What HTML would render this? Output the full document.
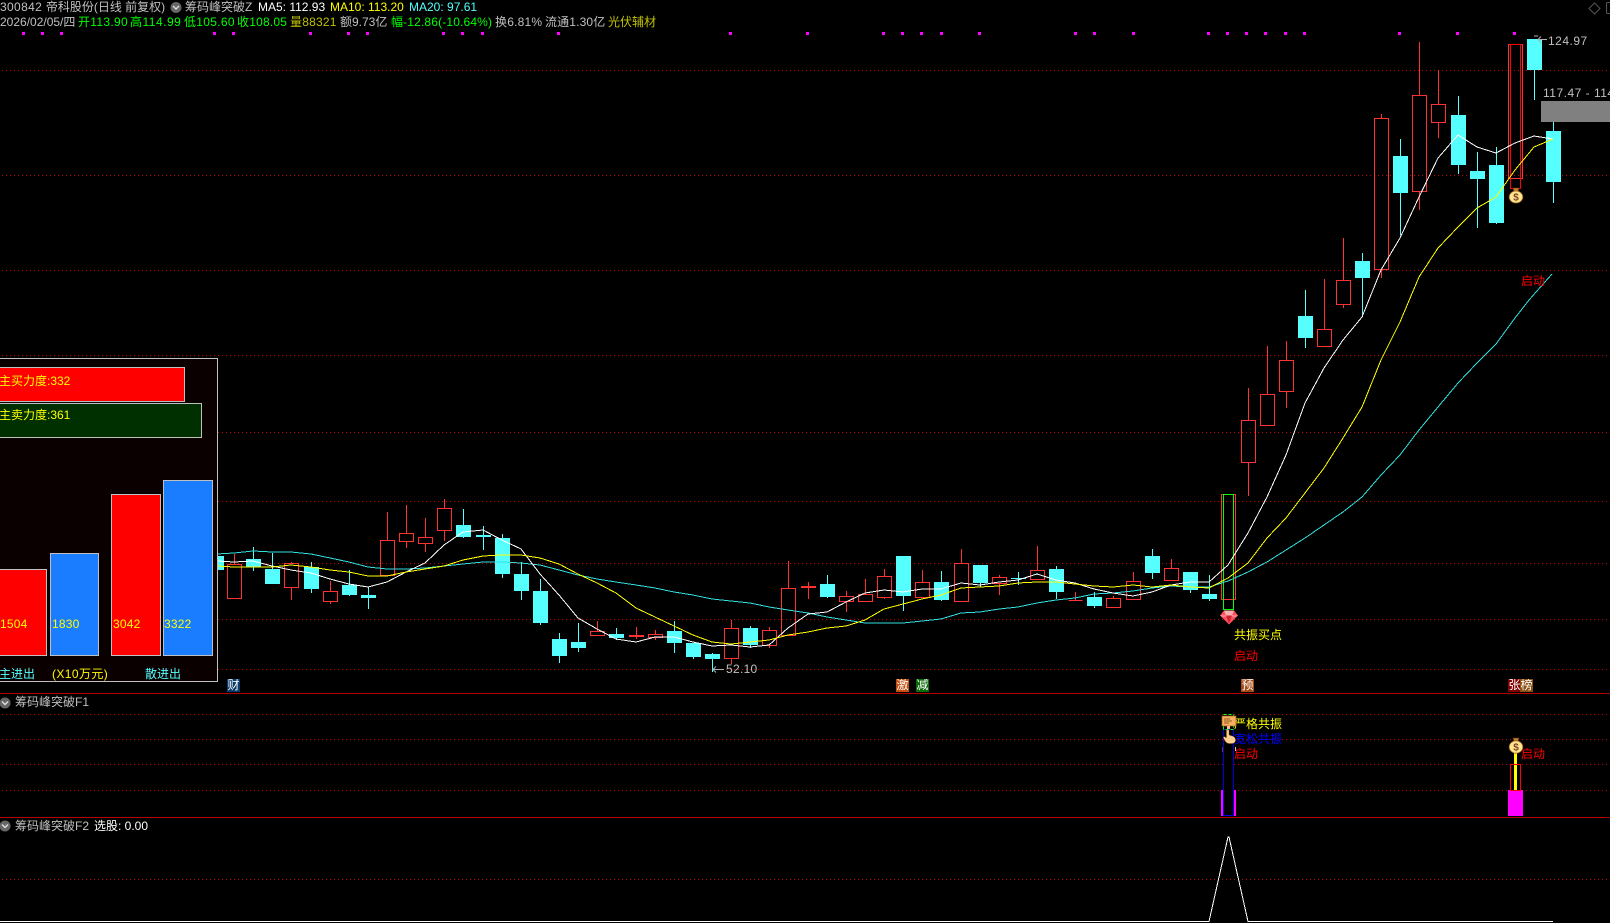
<!DOCTYPE html>
<html><head><meta charset="utf-8"><title>300842</title>
<style>
html,body{margin:0;padding:0;background:#000;width:1610px;height:923px;overflow:hidden}
#r{position:relative;width:1610px;height:923px;overflow:hidden;background:#000;font:12px/14px "Liberation Sans","WenQuanYi Zen Hei","Noto Sans CJK SC",sans-serif;color:#c0c0c0}
.t{position:absolute;white-space:nowrap;line-height:14px;height:14px}
svg{position:absolute;left:0;top:0}
#p{position:absolute;left:-1px;top:358px;width:217px;height:322px;border:1px solid #c0c0c0;background:#0a0000;overflow:hidden}
#p div{position:absolute;box-sizing:border-box}
.b{border:1px solid #c0c0c0}
.y{color:#ff0}.c{color:#5ff}.w{color:#fff}.g{color:#0f0}.o{color:#c0c000}.r{color:#f00}.u{color:#00f}
.tag{position:absolute;height:13px;width:13px;color:#fff;text-align:center;line-height:13px;top:679px;overflow:hidden}
</style></head><body><div id="r">
<svg width="1610" height="923" viewBox="0 0 1610 923">
<path shape-rendering="crispEdges" fill="none" stroke="#c00000" stroke-dasharray="1 3" d="M2 70.5H1608M2 175.5H1608M2 270.5H1608M2 355.5H1608M2 432.5H1608M2 501.5H1608M2 563.5H1608M2 619.5H1608M2 669.5H1608M2 714.5H1608M2 739.5H1608M2 764.5H1608M2 790.5H1608M2 879.5H1608"/>
<path shape-rendering="crispEdges" fill="none" stroke="#b00000" d="M0 693.5H1610M0 817.5H1610"/>
<path shape-rendering="crispEdges" fill="#f0f" d="M22 32h3v3h-3zM41 32h3v3h-3zM60 32h3v3h-3zM213 32h3v3h-3zM232 32h3v3h-3zM309 32h3v3h-3zM347 32h3v3h-3zM366 32h3v3h-3zM442 32h3v3h-3zM461 32h3v3h-3zM481 32h3v3h-3zM557 32h3v3h-3zM729 32h3v3h-3zM806 32h3v3h-3zM882 32h3v3h-3zM901 32h3v3h-3zM920 32h3v3h-3zM940 32h3v3h-3zM978 32h3v3h-3zM1074 32h3v3h-3zM1093 32h3v3h-3zM1132 32h3v3h-3zM1207 32h3v3h-3zM1226 32h3v3h-3zM1245 32h3v3h-3zM1264 32h3v3h-3zM1284 32h3v3h-3zM1303 32h3v3h-3zM1398 32h3v3h-3zM1456 32h3v3h-3zM1513 32h3v3h-3z"/>
<!-- wicks -->
<path shape-rendering="crispEdges" fill="none" stroke="#ff3232" d="M234.5 554V564M291.5 562V563M291.5 587V600M330.5 581V591M330.5 601V604M387.5 512V540M406.5 505V533M406.5 541V548M425.5 518V537M425.5 543V552M444.5 499V508M444.5 530V541M597.5 621V631M636.5 627V639M655.5 630V634M655.5 637V640M731.5 620V628M731.5 658V664M769.5 627V630M769.5 645V648M788.5 561V588M808.5 582V599M846.5 591V596M846.5 601V612M865.5 579V594M884.5 569V576M884.5 597V599M922.5 570V582M961.5 549V563M999.5 575V577M999.5 583V595M1037.5 546V570M1075.5 592V601M1113.5 596V598M1133.5 572V581M1171.5 559V568M1248.5 388V420M1248.5 462V496M1267.5 346V394M1267.5 425V426M1286.5 341V360M1286.5 391V408M1324.5 279V329M1343.5 238V280M1343.5 304V308M1381.5 114V118M1381.5 269V278M1419.5 42V95M1419.5 191V210M1438.5 70V104M1438.5 122V138"/>
<path shape-rendering="crispEdges" fill="none" stroke="#5ff" d="M253.5 547V571M272.5 553V584M311.5 562V593M349.5 570V596M368.5 587V609M463.5 509V538M483.5 526V550M502.5 534V578M521.5 562V600M540.5 579V625M559.5 633V663M578.5 623V652M616.5 628V640M674.5 621V653M693.5 643V659M712.5 653V672M750.5 626V648M827.5 575V598M903.5 556V611M941.5 571V601M980.5 565V587M1018.5 572V585M1056.5 566V599M1094.5 592V608M1152.5 549V579M1190.5 572V593M1209.5 575V601M1305.5 290V348M1362.5 253V317M1400.5 139V235M1458.5 96V174M1477.5 152V228M1496.5 147V224M1534.5 39V100M1553.5 122V203"/>
<!-- bodies -->
<path shape-rendering="crispEdges" fill="#55ffff" d="M209 556h15v14h-15zM246 559h15v8h-15zM265 569h15v15h-15zM304 567h15v22h-15zM342 585h15v10h-15zM361 595h15v3h-15zM456 525h15v12h-15zM476 535h15v2h-15zM495 538h15v36h-15zM514 574h15v17h-15zM533 591h15v32h-15zM552 639h15v17h-15zM571 642h15v6h-15zM609 634h15v4h-15zM667 631h15v12h-15zM686 643h15v14h-15zM705 654h15v5h-15zM743 628h15v17h-15zM820 584h15v13h-15zM896 556h15v40h-15zM934 582h15v18h-15zM973 565h15v18h-15zM1011 578h15v1h-15zM1049 569h15v23h-15zM1087 597h15v9h-15zM1145 556h15v17h-15zM1183 572h15v18h-15zM1202 594h15v5h-15zM1298 316h15v22h-15zM1355 261h15v17h-15zM1393 156h15v37h-15zM1451 115h15v50h-15zM1470 171h15v8h-15zM1489 165h15v58h-15zM1527 39h15v31h-15zM1546 131h15v51h-15z"/>
<path shape-rendering="crispEdges" fill="none" stroke="#ff3232" d="M227.5 564.5h14v34h-14zM284.5 563.5h14v24h-14zM323.5 591.5h14v10h-14zM380.5 540.5h14v35h-14zM399.5 533.5h14v8h-14zM418.5 537.5h14v6h-14zM437.5 508.5h14v22h-14zM590.5 631.5h14v4h-14zM629.5 635.5h14v1h-14zM648.5 634.5h14v3h-14zM724.5 628.5h14v30h-14zM762.5 630.5h14v15h-14zM781.5 588.5h14v47h-14zM801.5 586.5h14v1h-14zM839.5 596.5h14v5h-14zM858.5 594.5h14v7h-14zM877.5 576.5h14v21h-14zM915.5 582.5h14v15h-14zM954.5 563.5h14v38h-14zM992.5 577.5h14v6h-14zM1030.5 570.5h14v9h-14zM1068.5 600.5h14M1106.5 598.5h14v9h-14zM1126.5 581.5h14v18h-14zM1164.5 568.5h14v12h-14zM1221.5 494.5h14v105h-14zM1241.5 420.5h14v42h-14zM1260.5 394.5h14v31h-14zM1279.5 360.5h14v31h-14zM1317.5 329.5h14v17h-14zM1336.5 280.5h14v24h-14zM1374.5 118.5h14v151h-14zM1412.5 95.5h14v96h-14zM1431.5 104.5h14v18h-14zM1508.5 44.5h14v134h-14z"/>
<path shape-rendering="crispEdges" fill="none" stroke="#f00" d="M1510.5 44.5h10v144h-10z"/>
<path shape-rendering="crispEdges" fill="none" stroke="#0f0" d="M1223.5 494.5h10v115h-10z"/>
<!-- MAs -->
<g shape-rendering="crispEdges" fill="none">
<polyline stroke="#30e0e0" stroke-width="1" points="217,554 234,553 253,551 272,552 291,552 311,554 330,558 349,562 368,567 387,569 406,569 425,568 444,566 463,564 483,562 502,562 521,563 540,565 559,570 578,575 597,579 616,582 636,585 655,588 674,592 693,595 712,599 731,601 750,603 769,607 788,610 808,613 827,617 846,620 865,623 884,623 903,623 922,621 941,619 961,613 980,612 999,609 1018,607 1037,603 1056,600 1075,598 1094,594 1113,593 1133,591 1152,588 1171,586 1190,587 1209,587 1228,581 1248,572 1267,562 1286,550 1305,538 1324,525 1343,512 1362,497 1381,475 1400,455 1419,430 1438,407 1458,383 1477,363 1496,344 1515,318 1529,300 1552,274"/>
<polyline stroke="#fff" stroke-width="1" points="217,561 234,562 253,561 272,566 291,570 311,573 330,579 349,584 368,587 387,582 406,572 425,563 444,545 463,532 483,530 502,540 521,549 540,574 559,595 578,618 597,629 616,639 636,642 655,637 674,637 693,642 712,646 731,645 750,647 769,645 788,628 808,614 827,612 846,602 865,593 884,590 903,592 922,589 941,589 961,583 980,585 999,582 1018,580 1037,574 1056,580 1075,583 1094,589 1113,593 1133,596 1152,592 1171,585 1190,582 1209,582 1228,565 1248,533 1267,497 1286,455 1305,403 1324,368 1343,340 1362,317 1381,270 1400,238 1419,197 1438,158 1458,135 1477,147 1496,153 1515,143 1534,136 1553,139"/>
<polyline stroke="#ff0" stroke-width="1" points="217,566 234,567 253,567 272,567 291,565 311,567 330,570 349,572 368,576 387,576 406,572 425,569 444,566 463,560 483,556 502,555 521,555 540,558 559,564 578,574 597,583 616,593 636,608 655,617 674,626 693,635 712,642 731,644 750,642 769,640 788,635 808,632 827,628 846,626 865,620 884,609 903,604 922,599 941,595 961,588 980,587 999,586 1018,583 1037,582 1056,582 1075,584 1094,586 1113,587 1133,585 1152,587 1171,585 1190,587 1209,588 1228,578 1248,563 1267,538 1286,518 1305,493 1324,468 1343,438 1362,407 1381,360 1400,322 1419,277 1438,248 1458,227 1477,208 1496,197 1515,170 1534,147 1553,139"/>
</g>
<!-- F2 line -->
<path fill="none" stroke="#fff" stroke-width="1" shape-rendering="crispEdges" d="M0 921.5H1209L1228 837H1229L1248 921.5H1553"/>
<!-- grey box -->
<rect x="1541" y="101" width="69" height="21" fill="#808080"/>
<!-- arrow marks -->
<path fill="none" stroke="#b0b0b0" d="M1538 39.500H1547M1538 39.500l3-3M1538 39.500l3 3M1534 36h4M713 669.500H724M713 669.500l3-3M713 669.500l3 3"/>
<!-- top right -->
<path fill="none" stroke="#555" d="M1594.500 3l5.500 5.500-5.500 5.500-5.500-5.500zM1607.500 2.500h6v11h-6a1 1 0 0 1-1-1v-9a1 1 0 0 1 1-1z"/>
<!-- header icons -->
<g>
<circle cx="176" cy="7.500" r="5.500" fill="#666"/><path d="M173 6l3 3 3-3" stroke="#ddd" stroke-width="1.400" fill="none"/>
<circle cx="5" cy="703" r="5.500" fill="#666"/><path d="M2 701.500l3 3 3-3" stroke="#ddd" stroke-width="1.400" fill="none"/>
<circle cx="5" cy="826" r="5.500" fill="#666"/><path d="M2 824.500l3 3 3-3" stroke="#ddd" stroke-width="1.400" fill="none"/>
</g>
<!-- bag 1 -->
<g>
<path d="M1513 188h6l-1 4h-4z" fill="#c08030" stroke="#603010" stroke-width=".6"/>
<ellipse cx="1516" cy="197" rx="6.800" ry="6" fill="#ffe88a" stroke="#a06020" stroke-width=".8"/>
<text x="1516" y="200.500" text-anchor="middle" font-size="10" font-weight="bold" font-family="Liberation Sans,sans-serif" fill="#804030">$</text>
</g>
<!-- diamond -->
<path d="M1224 610.500h10l4 5-9 9-9-9z" fill="#ff5060"/>
<path d="M1224 610.500h10l-2 5h-6zM1220 615.500h18l-2 1h-14z" fill="#ffb0b0"/>
<path d="M1226 615.500h6l-3 8z" fill="#d02030"/>
<!-- F1 left bars -->
<rect x="1221" y="790" width="15" height="26" fill="#f0f"/>
<path shape-rendering="crispEdges" d="M1223.500 729.500h10v86h-10z" fill="#000" stroke="#0000e0"/>
<path shape-rendering="crispEdges" d="M1223.500 714.500h10v15h-10z" fill="none" stroke="#0f0" stroke-dasharray="3 2"/>
<rect x="1222" y="747" width="1" height="5" fill="#803030"/><rect x="1235" y="747" width="1" height="4" fill="#f0d080"/>
<!-- F1 right -->
<rect x="1508" y="790" width="15" height="26" fill="#f0f"/>
<rect x="1514" y="752" width="3" height="38" fill="#ff0"/>
<path shape-rendering="crispEdges" d="M1510.500 764.500h10v26h-10z" fill="none" stroke="#f00"/>
<path d="M1513 738h6l-1 3h-4z" fill="#c08030" stroke="#603010" stroke-width=".6"/>
<ellipse cx="1516" cy="747" rx="6.800" ry="6.200" fill="#ffe88a" stroke="#a06020" stroke-width=".8"/>
<text x="1516" y="750.500" text-anchor="middle" font-size="10" font-weight="bold" font-family="Liberation Sans,sans-serif" fill="#804030">$</text>
</svg>

<!-- top header -->
<div class="t" style="left:0;top:0"><span style="letter-spacing:.35px">300842 </span>帝科股份(日线 前复权)</div>
<div class="t" style="left:185px;top:0">筹码峰突破Z</div>
<div class="t w" style="left:258px;top:0">MA5: 112.93</div>
<div class="t y" style="left:330px;top:0">MA10: 113.20</div>
<div class="t c" style="left:409px;top:0">MA20: 97.61</div>

<div class="t" style="left:0;top:15px">2026/02/05/四</div>
<div class="t g" style="left:78px;top:15px;letter-spacing:.3px">开113.90</div>
<div class="t g" style="left:130px;top:15px;letter-spacing:.5px">高114.99</div>
<div class="t g" style="left:184px;top:15px;letter-spacing:.3px">低105.60</div>
<div class="t g" style="left:237px;top:15px;letter-spacing:.2px">收108.05</div>
<div class="t o" style="left:290px;top:15px;letter-spacing:.2px">量88321</div>
<div class="t" style="left:340px;top:15px">额9.73亿</div>
<div class="t g" style="left:391px;top:15px;letter-spacing:.15px">幅-12.86(-10.64%)</div>
<div class="t" style="left:495px;top:15px;letter-spacing:.2px">换6.81%</div>
<div class="t" style="left:545px;top:15px;letter-spacing:.15px">流通1.30亿</div>
<div class="t o" style="left:608px;top:15px">光伏辅材</div>

<!-- price labels -->
<div class="t" style="left:1548px;top:34px;letter-spacing:.5px">124.97</div>
<div class="t" style="left:1543px;top:86px;letter-spacing:.5px">117.47 - 114</div>
<div class="t" style="left:726px;top:662px;letter-spacing:.3px">52.10</div>
<div class="t r" style="left:1521px;top:274px">启动</div>

<div class="t y" style="left:1234px;top:628px">共振买点</div>
<div class="t r" style="left:1234px;top:649px">启动</div>
<div class="t y" style="left:1234px;top:717px">严格共振</div>
<div class="t u" style="left:1234px;top:732px">宽松共振</div>
<div class="t r" style="left:1234px;top:747px">启动</div>
<div class="t r" style="left:1521px;top:747px">启动</div>

<!-- icons above the F1 text -->
<svg width="1610" height="923" viewBox="0 0 1610 923">
<rect x="1222" y="716" width="14" height="10" fill="#f8b060" stroke="#a06020" stroke-width=".7"/>
<path d="M1224 719h6M1224 721h8M1224 723h5" stroke="#704010" stroke-width=".8"/>
<rect x="1227" y="726" width="3" height="3" fill="#f8c080"/>
<path d="M1226.500 730h2.500v5l3 1c2 .5 3.500 2 3.500 4 0 2-1.500 3.500-3.500 3.500h-3c-1.500 0-2.500-1-3.500-2l-2-3.500c-.5-1 .5-1.500 1.500-1l1.500 1z" fill="#ffd090" stroke="#a06020" stroke-width=".4"/>
</svg>

<div class="tag" style="left:227px;background:#0a3a6a">财</div>
<div class="tag" style="left:896px;background:#c05010">激</div>
<div class="tag" style="left:916px;background:#0a6a0a">减</div>
<div class="tag" style="left:1241px;background:#a04a14">预</div>
<div class="tag" style="left:1508px;background:#800000">张</div>
<div class="tag" style="left:1520px;background:#8a5014">榜</div>

<div class="t" style="left:15px;top:695px">筹码峰突破F1</div>
<div class="t" style="left:15px;top:819px">筹码峰突破F2</div>
<div class="t w" style="left:94px;top:819px">选股: 0.00</div>

<!-- left panel -->
<div id="p">
<div class="b" style="left:-10px;top:8px;width:195px;height:35px;background:#f00"></div>
<div class="b" style="left:-10px;top:44px;width:212px;height:35px;background:#003000"></div>
<div class="t y" style="left:-1px;top:15px">主买力度:332</div>
<div class="t y" style="left:-1px;top:49px">主卖力度:361</div>
<div class="b" style="left:-10px;top:210px;width:57px;height:87px;background:#f00"></div>
<div class="b" style="left:50px;top:194px;width:49px;height:103px;background:#1a7dff"></div>
<div class="b" style="left:111px;top:135px;width:50px;height:162px;background:#f00"></div>
<div class="b" style="left:163px;top:121px;width:50px;height:176px;background:#1a7dff"></div>
<div class="t y" style="left:0;top:258px;letter-spacing:.2px">1504</div>
<div class="t y" style="left:52px;top:258px;letter-spacing:.2px">1830</div>
<div class="t y" style="left:113px;top:258px;letter-spacing:.2px">3042</div>
<div class="t y" style="left:164px;top:258px;letter-spacing:.2px">3322</div>
<div class="t c" style="left:-1px;top:308px">主进出</div>
<div class="t y" style="left:52px;top:308px;letter-spacing:.4px">(X10万元)</div>
<div class="t c" style="left:145px;top:308px">散进出</div>
</div>
</div></body></html>
